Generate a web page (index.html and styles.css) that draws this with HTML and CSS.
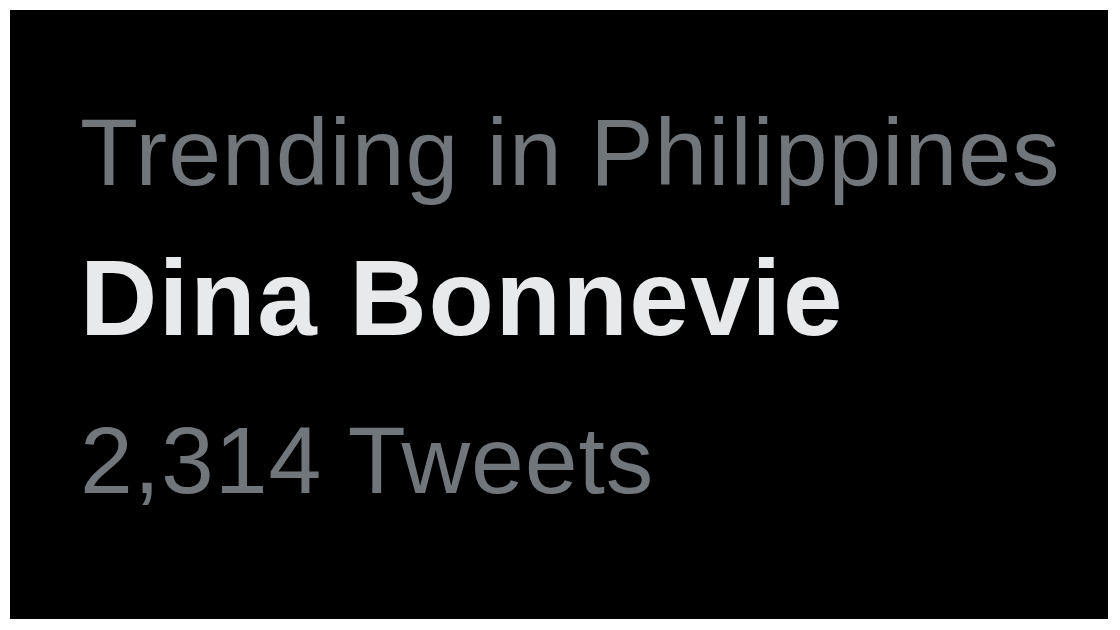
FILE: index.html
```html
<!DOCTYPE html>
<html>
<head>
<meta charset="utf-8">
<link rel="stylesheet" href="styles.css">
</head>
<body>
<div class="card">
  <div class="context">Trending in Philippines</div>
  <div class="topic">Dina Bonnevie</div>
  <div class="count">2,314 Tweets</div>
</div>
</body>
</html>
```
FILE: styles.css
```css
html, body {
  margin: 0;
  padding: 0;
  background: #ffffff;
}
body {
  width: 1120px;
  height: 630px;
  padding: 10px 12px 11px 10px;
  box-sizing: border-box;
}
.card {
  height: 100%;
  background: #000000;
  padding: 71px 0 0 70px;
  box-sizing: border-box;
  font-family: "Liberation Sans", Arial, sans-serif;
  display: flex;
  flex-direction: column;
}
.context {
  font-size: 95px;
  line-height: 143px;
  letter-spacing: 1px;
  color: #71767b;
  white-space: nowrap;
}
.topic {
  font-size: 107px;
  line-height: 148px;
  letter-spacing: 1.6px;
  font-weight: 700;
  color: #e7e9ea;
  white-space: nowrap;
}
.count {
  margin-top: 13px;
  font-size: 95px;
  line-height: 150px;
  letter-spacing: 0.9px;
  color: #71767b;
  white-space: nowrap;
}
```
